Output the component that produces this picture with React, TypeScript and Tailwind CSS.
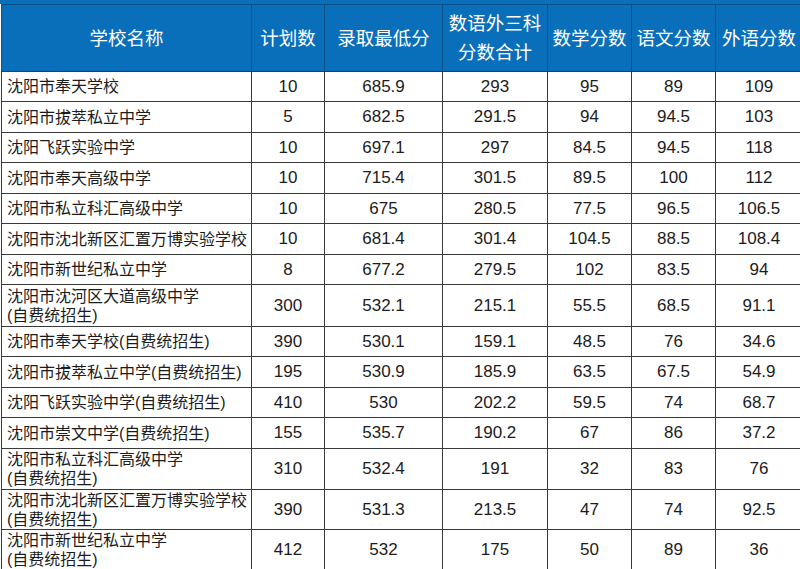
const rows: { name: string[]; h: string; v: string[] }[] = [
  { name: ["沈阳市奉天学校"], h: "h-[30px]", v: ["10", "685.9", "293", "95", "89", "109"] },
  { name: ["沈阳市拔萃私立中学"], h: "h-[31px]", v: ["5", "682.5", "291.5", "94", "94.5", "103"] },
  { name: ["沈阳飞跃实验中学"], h: "h-[30px]", v: ["10", "697.1", "297", "84.5", "94.5", "118"] },
  { name: ["沈阳市奉天高级中学"], h: "h-[31px]", v: ["10", "715.4", "301.5", "89.5", "100", "112"] },
  { name: ["沈阳市私立科汇高级中学"], h: "h-[30px]", v: ["10", "675", "280.5", "77.5", "96.5", "106.5"] },
  { name: ["沈阳市沈北新区汇置万博实验学校"], h: "h-[31px]", v: ["10", "681.4", "301.4", "104.5", "88.5", "108.4"] },
  { name: ["沈阳市新世纪私立中学"], h: "h-[30px]", v: ["8", "677.2", "279.5", "102", "83.5", "94"] },
  { name: ["沈阳市沈河区大道高级中学", "(自费统招生)"], h: "h-[42px]", v: ["300", "532.1", "215.1", "55.5", "68.5", "91.1"] },
  { name: ["沈阳市奉天学校(自费统招生)"], h: "h-[30px]", v: ["390", "530.1", "159.1", "48.5", "76", "34.6"] },
  { name: ["沈阳市拔萃私立中学(自费统招生)"], h: "h-[31px]", v: ["195", "530.9", "185.9", "63.5", "67.5", "54.9"] },
  { name: ["沈阳飞跃实验中学(自费统招生)"], h: "h-[30px]", v: ["410", "530", "202.2", "59.5", "74", "68.7"] },
  { name: ["沈阳市崇文中学(自费统招生)"], h: "h-[31px]", v: ["155", "535.7", "190.2", "67", "86", "37.2"] },
  { name: ["沈阳市私立科汇高级中学", "(自费统招生)"], h: "h-[41px]", v: ["310", "532.4", "191", "32", "83", "76"] },
  { name: ["沈阳市沈北新区汇置万博实验学校", "(自费统招生)"], h: "h-[40px]", v: ["390", "531.3", "213.5", "47", "74", "92.5"] },
  { name: ["沈阳市新世纪私立中学", "(自费统招生)"], h: "h-[41px]", v: ["412", "532", "175", "50", "89", "36"] },
];

const headers: string[][] = [
  ["学校名称"],
  ["计划数"],
  ["录取最低分"],
  ["数语外三科", "分数合计"],
  ["数学分数"],
  ["语文分数"],
  ["外语分数"],
];

export default function App() {
  return (
    <div
      className="h-[569px] w-[800px] overflow-hidden bg-white text-[#1c1c1c]"
      style={{ fontFamily: '"Liberation Sans", "Noto Sans CJK SC", sans-serif' }}
    >
      <div className="h-[4px] bg-[#0a6fba]" />
      <table className="ml-px w-[801px] table-fixed border-collapse">
        <colgroup>
          <col className="w-[250px]" />
          <col className="w-[73px]" />
          <col className="w-[118px]" />
          <col className="w-[105px]" />
          <col className="w-[84px]" />
          <col className="w-[84px]" />
          <col className="w-[87px]" />
        </colgroup>
        <thead>
          <tr className="h-[67px] bg-[#0a6fba]">
            {headers.map((h, i) => (
              <th
                key={i}
                className="border border-[#0b4f86] border-b-[#2a3a48] px-0 text-center text-[18.5px] font-normal leading-[29px] text-white"
              >
                {h.map((line) => (
                  <div key={line}>{line}</div>
                ))}
              </th>
            ))}
          </tr>
        </thead>
        <tbody>
          {rows.map((r, i) => (
            <tr key={i} className={r.h}>
              <td className="border border-[#3a3a3a] pl-[5px] text-left text-[16px] leading-[19px]">
                {r.name.map((line) => (
                  <div key={line} className="whitespace-nowrap">
                    {line}
                  </div>
                ))}
              </td>
              {r.v.map((v, j) => (
                <td key={j} className="border border-[#3a3a3a] text-center text-[17px]">
                  {v}
                </td>
              ))}
            </tr>
          ))}
        </tbody>
      </table>
    </div>
  );
}
